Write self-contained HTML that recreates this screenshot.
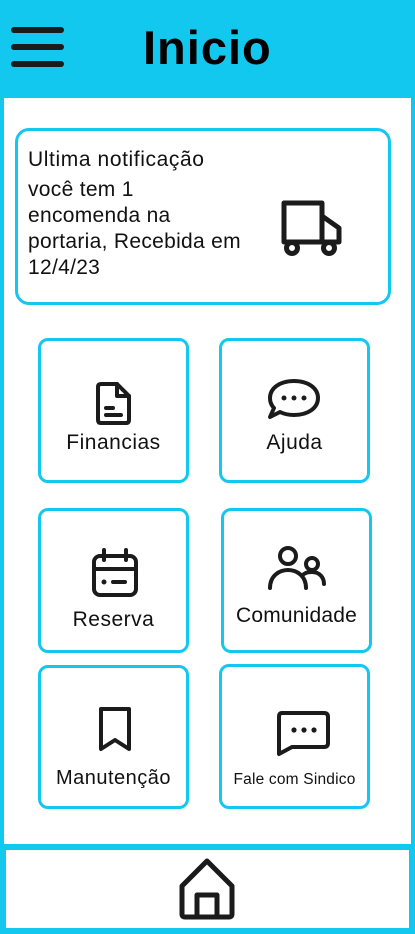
<!DOCTYPE html>
<html><head><meta charset="utf-8"><style>
*{margin:0;padding:0;box-sizing:border-box}
body{width:415px;height:934px;background:#12c8ef;position:relative;overflow:hidden;font-family:"Liberation Sans",sans-serif;color:#111}
.hdr{position:absolute;left:0;top:0;width:415px;height:98px;background:#12c8ef}
.menu{position:absolute;left:11px;width:53px;height:6px;background:#1b1b1b;border-radius:3px}
.title{position:absolute;left:143px;top:20px;font-size:47px;font-weight:bold;color:#000;letter-spacing:1px}
.main{position:absolute;left:4px;top:98px;width:407px;height:746px;background:#fff}
.card{position:absolute;border:3px solid #12c8ef;border-radius:10px;background:#fff}
.lbl{position:absolute;left:0;right:0;text-align:center;font-size:21px;color:#111;white-space:nowrap;letter-spacing:0.5px}
.foot{position:absolute;left:6px;top:850px;width:403px;height:78px;background:#fff}
svg{position:absolute}
</style></head><body>
<div class="hdr">
<div class="menu" style="top:27px"></div>
<div class="menu" style="top:44px"></div>
<div class="menu" style="top:61px"></div>
<div class="title">Inicio</div>
</div>
<div class="main"></div>

<div class="card" style="left:15px;top:128px;width:376px;height:177px;border-radius:14px">
<div style="position:absolute;left:10px;top:14px;font-size:21px;line-height:30px;white-space:nowrap;letter-spacing:0.6px">Ultima notificação</div>
<div style="position:absolute;left:10px;top:46px;font-size:21px;line-height:26px;white-space:nowrap;letter-spacing:0.3px">você tem 1<br>encomenda na<br>portaria, Recebida em<br>12/4/23</div>
<svg style="left:262px;top:69px" width="64" height="60" viewBox="0 0 64 60"><g fill="none" stroke="#1b1b1b" stroke-width="5" stroke-linejoin="round"><path d="M4 3 H42 V42 H4 Z"/><path d="M42 16 L59 28 V42 H42"/><circle cx="12" cy="48" r="5.5" fill="#fff"/><circle cx="49" cy="48" r="5.5" fill="#fff"/></g></svg>
</div>

<div class="card" style="left:38px;top:338px;width:151px;height:145px">
<svg style="left:54px;top:40px" width="40" height="48" viewBox="0 0 40 48"><g fill="none" stroke="#1b1b1b" stroke-width="4" stroke-linejoin="round" stroke-linecap="round"><path d="M6 3 H22 L34 15 V39 Q34 42 31 42 H6 Q3 42 3 39 V6 Q3 3 6 3Z"/><path d="M22 3 V15 H34"/><path d="M11 27 H18 M11 34 H26"/></g></svg>
<div class="lbl" style="top:90px">Financias</div>
</div>

<div class="card" style="left:219px;top:338px;width:151px;height:145px">
<svg style="left:44px;top:36px" width="56" height="46" viewBox="0 0 56 46"><g fill="none" stroke="#1b1b1b" stroke-width="4" stroke-linejoin="round"><path d="M28 4 C42 4 52 11 52 21 C52 31 42 38 28 38 C22 38 18 37 14 35 L4 40 L8 31 C5 28 4 25 4 21 C4 11 14 4 28 4Z"/></g><g fill="#1b1b1b"><circle cx="18" cy="21" r="2.5"/><circle cx="28" cy="21" r="2.5"/><circle cx="38" cy="21" r="2.5"/></g></svg>
<div class="lbl" style="top:90px">Ajuda</div>
</div>

<div class="card" style="left:38px;top:508px;width:151px;height:145px">
<svg style="left:49px;top:36px" width="52" height="52" viewBox="0 0 52 52"><g fill="none" stroke="#1b1b1b" stroke-width="4" stroke-linejoin="round" stroke-linecap="round"><rect x="4" y="9" width="42" height="39" rx="6"/><path d="M4 22 H46 M14 3 V13 M36 3 V13 M23 35 H35"/></g><circle cx="14" cy="35" r="2.5" fill="#1b1b1b"/></svg>
<div class="lbl" style="top:97px">Reserva</div>
</div>

<div class="card" style="left:221px;top:508px;width:151px;height:145px">
<svg style="left:42px;top:33px" width="62" height="52" viewBox="0 0 62 52"><g fill="none" stroke="#1b1b1b" stroke-width="4" stroke-linecap="round"><circle cx="22" cy="12" r="8"/><circle cx="46" cy="20" r="6"/><path d="M4 44 C4 32 13 26 22 26 C31 26 40 32 40 44"/><path d="M38 30 C41 28 43 28 46 28 C54 28 58 34 58 40"/></g></svg>
<div class="lbl" style="top:93px;letter-spacing:0.2px">Comunidade</div>
</div>

<div class="card" style="left:38px;top:665px;width:151px;height:144px">
<svg style="left:55px;top:37px" width="38" height="48" viewBox="0 0 38 48"><path d="M5 4 H33 V44 L19 35 L5 44 Z" fill="none" stroke="#1b1b1b" stroke-width="4" stroke-linejoin="round"/></svg>
<div class="lbl" style="top:99px;font-size:20px">Manutenção</div>
</div>

<div class="card" style="left:219px;top:664px;width:151px;height:145px">
<svg style="left:52px;top:42px" width="58" height="50" viewBox="0 0 58 50"><g fill="none" stroke="#1b1b1b" stroke-width="4" stroke-linejoin="round"><path d="M8 4 H50 Q54 4 54 8 V34 Q54 38 50 38 H18 L5 45 V8 Q5 4 8 4Z"/></g><g fill="#1b1b1b"><circle cx="20" cy="21" r="2.6"/><circle cx="30" cy="21" r="2.6"/><circle cx="40" cy="21" r="2.6"/></g></svg>
<div class="lbl" style="top:104px;font-size:15.5px;letter-spacing:0.2px">Fale com Sindico</div>
</div>

<div class="foot"></div>
<svg style="left:176px;top:856px" width="62" height="66" viewBox="0 0 62 66"><g fill="none" stroke="#1b1b1b" stroke-width="5" stroke-linejoin="round"><path d="M31 5 L56 30 V58 Q56 61 53 61 H9 Q6 61 6 58 V30 Z"/><path d="M21 61 V39 H41 V61"/></g></svg>
</body></html>
